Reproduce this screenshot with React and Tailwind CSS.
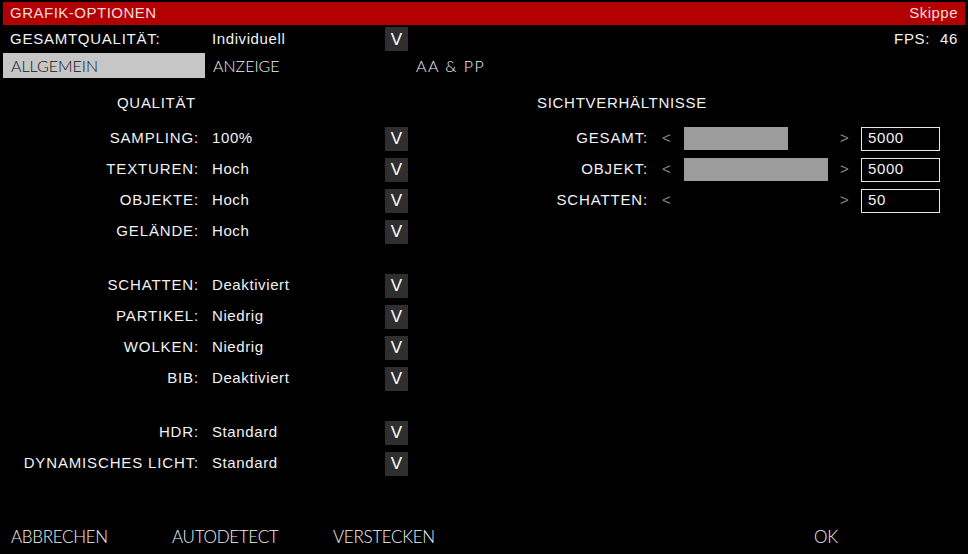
import React from "react";

const qualityGroups = [
  [
    { label: "SAMPLING:", value: "100%" },
    { label: "TEXTUREN:", value: "Hoch" },
    { label: "OBJEKTE:", value: "Hoch" },
    { label: "GELÄNDE:", value: "Hoch" },
  ],
  [
    { label: "SCHATTEN:", value: "Deaktiviert" },
    { label: "PARTIKEL:", value: "Niedrig" },
    { label: "WOLKEN:", value: "Niedrig" },
    { label: "BIB:", value: "Deaktiviert" },
  ],
  [
    { label: "HDR:", value: "Standard" },
    { label: "DYNAMISCHES LICHT:", value: "Standard" },
  ],
];

const viewRanges = [
  { label: "GESAMT:", fill: 104, value: "5000" },
  { label: "OBJEKT:", fill: 144, value: "5000" },
  { label: "SCHATTEN:", fill: 0, value: "50" },
];

const mainFont = { fontFamily: '"Liberation Sans", Arial, sans-serif' };
const thinFont = { fontFamily: 'Lato, "Liberation Sans", sans-serif' };

const DropButton = () => (
  <div className="w-[23px] h-[24px] bg-[#2f2f2f] flex items-center justify-center text-white text-[17px] leading-none">
    V
  </div>
);

const SettingRow = ({ label, value }) => (
  <div className="h-[31px] flex items-center">
    <div className="w-[199px] text-right tracking-[0.85px]">{label}</div>
    <div className="w-[186px] pl-[13px] tracking-[0.6px]">{value}</div>
    <DropButton />
  </div>
);

const RangeRow = ({ label, fill, value }) => (
  <div className="h-[31px] flex items-center">
    <div className="w-[111px] text-right tracking-[0.85px]">{label}</div>
    <div className="w-[36px] pl-[14px] text-[#8a8a8a]">&lt;</div>
    <div className="w-[156px] h-[23px]">
      {fill > 0 && <div className="h-full bg-[#9c9c9c]" style={{ width: fill }} />}
    </div>
    <div className="w-[21px] text-[#8a8a8a]">&gt;</div>
    <div className="w-[79px] h-[24px] border border-[#e8e8e8] pl-[6px] flex items-center tracking-[0.6px]">
      {value}
    </div>
  </div>
);

export default function App() {
  return (
    <div
      className="w-[968px] h-[554px] bg-black text-[#f2f2f2] text-[15px] flex flex-col overflow-hidden"
      style={mainFont}
    >
      {/* Title bar */}
      <div className="mx-[3px] mt-[2px] h-[23px] bg-[#b30000] flex items-center justify-between px-[7px] text-[#f6dcdc] tracking-[0.5px]">
        <span>GRAFIK-OPTIONEN</span>
        <span>Skippe</span>
      </div>

      {/* Preset */}
      <div className="h-[28px] flex items-center">
        <div className="w-[212px] pl-[10px] tracking-[0.75px]">GESAMTQUALITÄT:</div>
        <div className="w-[173px] tracking-[0.6px]">Individuell</div>
        <DropButton />
        <div className="flex-1 text-right pr-[10px] tracking-[0.7px]">FPS:&nbsp; 46</div>
      </div>

      {/* Tabs */}
      <div className="h-[25px] flex items-center text-[16px]" style={thinFont}>
        <div className="ml-[3px] w-[202px] h-full bg-[#c6c6c6] text-[#111] font-light pl-[8px] flex items-center">
          ALLGEMEIN
        </div>
        <div className="w-[203px] pl-[8px] font-light">ANZEIGE</div>
        <div className="pl-[8px] font-light tracking-[1.5px]">AA &amp; PP</div>
      </div>

      {/* Content */}
      <div className="flex pt-[10px]">
        <div className="w-[537px] flex flex-col">
          <div className="h-[31px] mb-[4px] flex items-center pl-[117px] tracking-[0.7px]">QUALITÄT</div>
          {qualityGroups.map((group, i) => (
            <div key={i} className={i > 0 ? "mt-[23px]" : ""}>
              {group.map((row) => (
                <SettingRow key={row.label} {...row} />
              ))}
            </div>
          ))}
        </div>
        <div className="flex flex-col">
          <div className="h-[31px] mb-[4px] flex items-center tracking-[0.7px]">SICHTVERHÄLTNISSE</div>
          {viewRanges.map((row) => (
            <RangeRow key={row.label} {...row} />
          ))}
        </div>
      </div>

      {/* Footer */}
      <div className="mt-auto h-[34px] flex items-center text-[17px] font-light tracking-[-0.3px]" style={thinFont}>
        <div className="w-[172px] pl-[11px]">ABBRECHEN</div>
        <div className="w-[161px]">AUTODETECT</div>
        <div className="w-[481px]">VERSTECKEN</div>
        <div>OK</div>
      </div>
    </div>
  );
}
